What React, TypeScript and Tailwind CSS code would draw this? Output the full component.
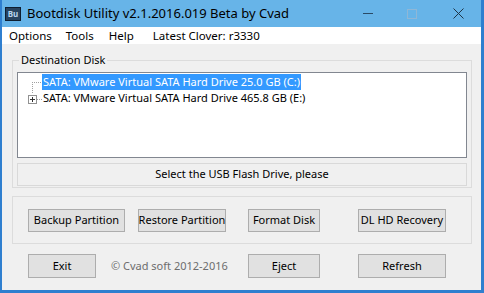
import React from 'react';

const font = { fontFamily: '"Noto Sans", "Open Sans", Arial, sans-serif' };

function Btn({ label, w, ml }: { label: string; w: string; ml: string }) {
  return (
    <div
      className={`${w} ${ml} shrink-0 h-full flex items-center justify-center whitespace-nowrap bg-[#e1e1e1] border border-[#adadad] text-[11px] text-black`}
    >
      {label}
    </div>
  );
}

function TreeLines() {
  // dotted connector lines + expand box for the disk tree
  return (
    <svg width="24" height="34" viewBox="0 0 24 34" className="shrink-0">
      <g fill="#a0a0a0">
        {[14, 16, 18, 20, 22].map((x) => (
          <rect key={'h1' + x} x={x} y={8} width={1} height={1} />
        ))}
        {[8, 10, 12, 14, 16, 18].map((y) => (
          <rect key={'v' + y} x={14} y={y} width={1} height={1} />
        ))}
        {[19, 21, 23].map((x) => (
          <rect key={'h2' + x} x={x} y={25} width={1} height={1} />
        ))}
      </g>
      <rect x="10.5" y="21.5" width="8" height="8" fill="#fff" stroke="#919191" />
      <rect x="12" y="25" width="5" height="1" fill="#333" />
      <rect x="14" y="23" width="1" height="5" fill="#333" />
    </svg>
  );
}

export default function App() {
  return (
    <div
      className="w-[484px] h-[293px] flex flex-col bg-[#f0f0f0] border-l-2 border-r-[3px] border-b-[3px] border-[#2f7fcf] overflow-hidden"
      style={font}
    >
      {/* title bar */}
      <div className="h-[27px] shrink-0 flex items-center bg-[#67b4e8] text-black">
        <div className="ml-[3px] w-[16px] h-[14px] flex items-center justify-center bg-[#27435f] border border-[#0e1e30] text-[8px] font-bold leading-none text-[#b9d4ee]">
          Bu
        </div>
        <div className="ml-[6px] text-[13px] leading-none whitespace-nowrap">Bootdisk Utility v2.1.2016.019 Beta by Cvad</div>
        <div className="ml-auto flex items-center h-full">
          <div className="w-[10px] h-[1px] bg-[#2a4a66] mr-[34px]" />
          <div className="w-[10px] h-[10px] border border-[#8fb7d6] mr-[36px]" />
          <svg width="11" height="11" viewBox="0 0 11 11" className="mr-[17px]">
            <path d="M0.5 0.5 L10.5 10.5 M10.5 0.5 L0.5 10.5" stroke="#1d3447" strokeWidth="1" />
          </svg>
        </div>
      </div>

      {/* menu bar */}
      <div className="h-[17px] shrink-0 flex items-center bg-white text-[11.5px] text-black pl-[7px] whitespace-nowrap">
        <span>Options</span>
        <span className="ml-[14px]">Tools</span>
        <span className="ml-[15px]">Help</span>
        <span className="ml-[19px]">Latest Clover: r3330</span>
      </div>

      {/* destination disk group */}
      <div className="relative mt-[16px] ml-[10px] w-[460px] h-[128px] border border-[#dcdcdc] px-[4px] pt-[11px]">
        <span className="absolute left-[6px] top-[-9px] px-[2px] bg-[#f0f0f0] text-[11px] leading-[16px] text-black whitespace-nowrap">
          Destination Disk
        </span>
        <div className="h-[86px] bg-white border border-[#828790] flex items-start pt-[1px] text-[11px] leading-[16px]">
          <TreeLines />
          <div className="flex flex-col whitespace-nowrap">
            <span className="w-fit px-[1px] bg-[#3399ff] text-white">SATA: VMware Virtual SATA Hard Drive 25.0 GB (C:)</span>
            <span className="w-fit px-[1px] text-black">SATA: VMware Virtual SATA Hard Drive 465.8 GB (E:)</span>
          </div>
        </div>
        <div className="mt-[5px] h-[23px] border border-[#d9d9d9] flex items-center justify-center text-[11px] text-black">
          Select the USB Flash Drive, please
        </div>
      </div>

      {/* action buttons group */}
      <div className="mt-[8px] ml-[10px] w-[460px] h-[48px] border border-[#dcdcdc] flex items-center">
        <div className="flex h-[23px] items-stretch">
          <Btn label="Backup Partition" w="w-[97px]" ml="ml-[15px]" />
          <Btn label="Restore Partition" w="w-[88px]" ml="ml-[13px]" />
          <Btn label="Format Disk" w="w-[72px]" ml="ml-[22px]" />
          <Btn label="DL HD Recovery" w="w-[88px]" ml="ml-[38px]" />
        </div>
      </div>

      {/* bottom row */}
      <div className="mt-[10px] flex h-[24px] items-stretch">
        <Btn label="Exit" w="w-[68px]" ml="ml-[26px]" />
        <div className="ml-[15px] w-[137px] shrink-0 flex items-center whitespace-nowrap text-[11px] text-[#6d6d6d]">© Cvad soft 2012-2016</div>
        <Btn label="Eject" w="w-[72px]" ml="ml-0" />
        <Btn label="Refresh" w="w-[88px]" ml="ml-[38px]" />
      </div>
    </div>
  );
}
